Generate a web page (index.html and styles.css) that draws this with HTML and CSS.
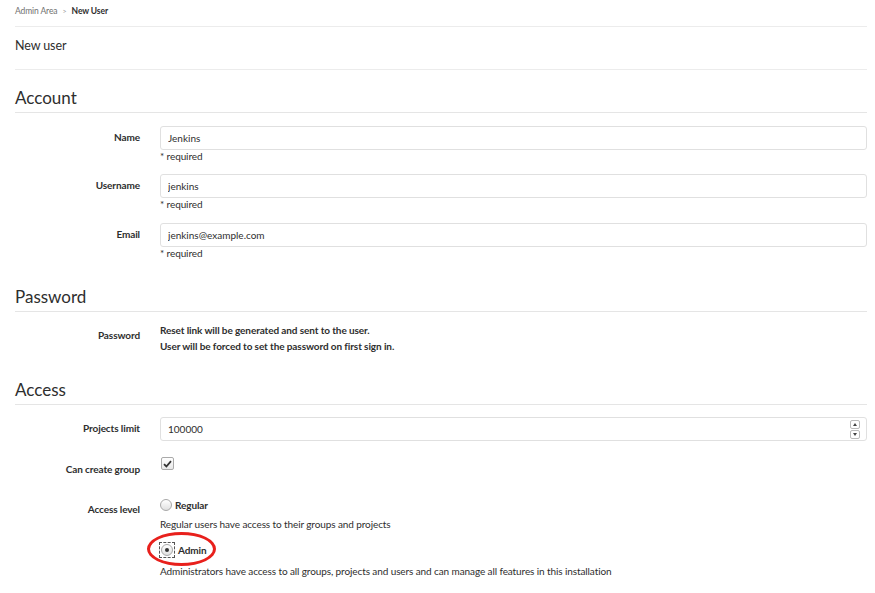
FILE: index.html
```html
<!DOCTYPE html>
<html lang="en">
<head>
    <meta charset="UTF-8">
    <meta name="viewport" content="width=device-width, initial-scale=1.0">
    <title>New User · Admin Area</title>
    <link rel="stylesheet" href="styles.css">
</head>
<body>

<div class="page">
    <div class="breadcrumb">
        <span class="crumb">Admin Area</span>
        <span class="sep">&gt;</span>
        <span class="crumb current">New User</span>
    </div>

    <h3 class="page-title">New user</h3>

    <form class="user-form">
        <fieldset>
            <legend>Account</legend>

            <div class="form-group">
                <label class="control-label" for="user_name">Name</label>
                <div class="controls">
                    <input type="text" id="user_name" class="form-control" value="Jenkins">
                    <div class="help">* required</div>
                </div>
            </div>

            <div class="form-group">
                <label class="control-label" for="user_username">Username</label>
                <div class="controls">
                    <input type="text" id="user_username" class="form-control" value="jenkins">
                    <div class="help">* required</div>
                </div>
            </div>

            <div class="form-group">
                <label class="control-label" for="user_email">Email</label>
                <div class="controls">
                    <input type="text" id="user_email" class="form-control" value="jenkins@example.com">
                    <div class="help">* required</div>
                </div>
            </div>
        </fieldset>

        <fieldset>
            <legend>Password</legend>

            <div class="form-group static">
                <label class="control-label">Password</label>
                <div class="controls">
                    <strong class="info">Reset link will be generated and sent to the user.<br>
                    User will be forced to set the password on first sign in.</strong>
                </div>
            </div>
        </fieldset>

        <fieldset class="access">
            <legend>Access</legend>

            <div class="form-group">
                <label class="control-label" for="user_projects_limit">Projects limit</label>
                <div class="controls">
                    <input type="text" id="user_projects_limit" class="form-control" value="100000">
                    <span class="spinner">
                        <span class="spin up"></span>
                        <span class="spin down"></span>
                    </span>
                </div>
            </div>

            <div class="form-group check-row">
                <label class="control-label">Can create group</label>
                <div class="controls">
                    <span class="checkbox">
                        <svg width="9" height="8" viewBox="0 0 9 8"><path d="M1 4.2 L3.4 6.5 L8 1.2" fill="none" stroke="#333" stroke-width="1.8"/></svg>
                    </span>
                </div>
            </div>

            <div class="form-group radio-row">
                <label class="control-label">Access level</label>
                <div class="controls">
                    <div class="radio-option">
                        <span class="radio"></span>
                        <strong>Regular</strong>
                    </div>
                    <p class="radio-help">Regular users have access to their groups and projects</p>

                    <div class="radio-option admin">
                        <span class="focus"><span class="radio checked"></span></span>
                        <strong>Admin</strong>
                        <span class="highlight"></span>
                    </div>
                    <p class="radio-help">Administrators have access to all groups, projects and users and can manage all features in this installation</p>
                </div>
            </div>
        </fieldset>
    </form>
</div>

</body>
</html>
```

FILE: styles.css
```css
body {
    margin: 0;
    font-family: Lato, "Noto Sans", sans-serif;
    font-size: 10px;
    letter-spacing: -0.1px;
    color: #2e2e2e;
    background-color: white;
}

.page {
    padding: 0 8px 0 15px;
}

.breadcrumb {
    height: 27px;
    box-sizing: border-box;
    padding-top: 5px;
    line-height: 12px;
    font-size: 8.5px;
    border-bottom: 1px solid #ececec;
}

.crumb {
    color: #707070;
}

.sep {
    color: #999;
    font-size: 7px;
    margin: 0 3px;
}

.crumb.current {
    color: #2e2e2e;
    font-weight: bold;
}

.page-title {
    margin: 0;
    padding: 12px 0 16px;
    font-size: 12.5px;
    line-height: 14px;
    font-weight: normal;
    border-bottom: 1px solid #ececec;
}

fieldset {
    border: 0;
    margin: 0;
    padding: 0;
}

legend {
    display: block;
    width: 100%;
    padding: 18px 0 4px;
    font-size: 17px;
    line-height: 20px;
    letter-spacing: 0;
    color: #2e2e2e;
    border-bottom: 1px solid #e5e5e5;
}

.user-form fieldset + fieldset legend {
    padding-top: 28px;
}

.user-form .access legend {
    padding-top: 26px;
}

.form-group {
    display: flex;
    margin-top: 12.5px;
}

.control-label {
    flex: 0 0 125px;
    text-align: right;
    padding-top: 4px;
    line-height: 14px;
    font-weight: bold;
    margin-right: 20px;
}

.controls {
    flex: 1;
    position: relative;
}

.form-control {
    display: block;
    width: 100%;
    box-sizing: border-box;
    height: 24px;
    padding: 0 7px;
    border: 1px solid #e0e0e0;
    border-radius: 3px;
    font-family: inherit;
    font-size: 10px;
    color: #2e2e2e;
}

.help {
    line-height: 12px;
}

.static {
    margin-top: 10px;
}

.static .control-label {
    padding-top: 6px;
}

.info {
    display: block;
    line-height: 16px;
}

.spinner {
    position: absolute;
    right: 7px;
    top: 3px;
    display: flex;
    flex-direction: column;
    gap: 1px;
}

.spin {
    width: 8px;
    height: 7px;
    border: 1px solid #bbb;
    border-radius: 2px;
    position: relative;
}

.spin::after {
    content: "";
    position: absolute;
    left: 2px;
    border-left: 2px solid transparent;
    border-right: 2px solid transparent;
}

.spin.up::after {
    top: 2px;
    border-bottom: 3px solid #444;
}

.spin.down::after {
    top: 2px;
    border-top: 3px solid #444;
}

.check-row {
    margin-top: 16px;
}

.check-row .control-label {
    padding-top: 5px;
}

.checkbox {
    display: inline-flex;
    align-items: center;
    justify-content: center;
    width: 11px;
    height: 11px;
    margin: 0 0 0 1px;
    border: 1px solid #aaa;
    border-radius: 2px;
    background: linear-gradient(#fff, #e8e8e8);
}

.radio-row {
    margin-top: 22px;
}

.radio-row .control-label {
    padding-top: 4px;
}

.radio-option {
    display: flex;
    align-items: center;
    gap: 3px;
    height: 14px;
    position: relative;
}

.radio {
    display: inline-block;
    width: 10px;
    height: 10px;
    border: 1px solid #a8a8a8;
    border-radius: 50%;
    background: linear-gradient(#fff, #e0e0e0);
    position: relative;
}

.radio.checked::after {
    content: "";
    position: absolute;
    left: 3px;
    top: 3px;
    width: 4px;
    height: 4px;
    border-radius: 50%;
    background-color: #333;
}

.focus {
    display: inline-flex;
    padding: 1px;
    border: 1px dashed #555;
    margin-left: -1px;
}

.radio-help {
    margin: 6px 0 13px;
    line-height: 12px;
}

.radio-option.admin + .radio-help {
    margin-top: 8px;
}

.highlight {
    position: absolute;
    left: -13px;
    top: -11px;
    width: 63px;
    height: 28px;
    border: 3px solid #e8201c;
    border-radius: 50%;
}
```
